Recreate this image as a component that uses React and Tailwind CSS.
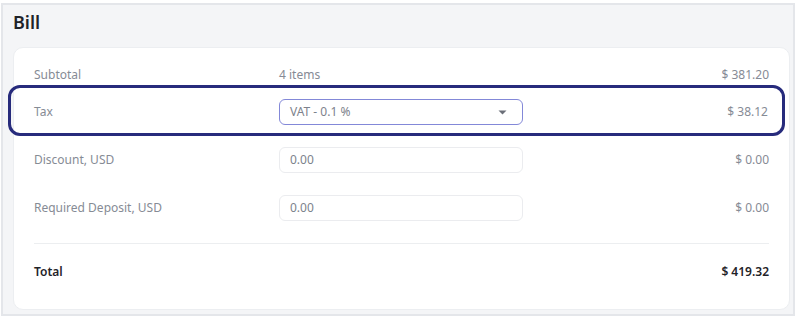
import React from "react";

function Caret() {
  return (
    <svg width="9" height="5" viewBox="0 0 9 5" className="block">
      <path d="M0.5 0.5 L8.5 0.5 L4.5 4.5 Z" fill="#6b6f78" />
    </svg>
  );
}

export default function App() {
  const font = { fontFamily: '"Noto Sans", sans-serif' };
  return (
    <div style={font} className="w-[797px] h-[317px] bg-white">
      <div className="ml-[1px] mt-[3px] w-[794px] h-[313px] bg-[#f4f5f7] border-2 border-[#e4e6ea] flex flex-col">
        <div className="pl-[10px] pt-[2px] h-[42px] text-[18px] font-semibold text-[#1f2328] leading-[30px]">
          Bill
        </div>
        <div className="ml-[10px] w-[777px] flex-1 mb-[4px] bg-white border border-[#eceef1] rounded-[10px] pt-[17px] flex flex-col text-[12px] text-[#868b95]">
          {/* Subtotal */}
          <div className="h-[20px] px-[20px] flex items-center">
            <div className="w-[245px]">Subtotal</div>
            <div className="flex-1">4 items</div>
            <div className="text-right">$ 381.20</div>
          </div>
          {/* Tax highlighted */}
          <div className="-ml-[6px] mr-[4px] border-[3px] border-[#272b7c] rounded-[12px] pt-[11px] pb-[8px] pl-[23px] pr-[14px] flex items-center">
            <div className="w-[245px]">Tax</div>
            <div className="w-[244px] h-[26px] border border-[#8388d8] rounded-[6px] flex items-center pl-[10px] pr-[15px] text-[#7d828c]">
              <span className="flex-1">VAT - 0.1 %</span>
              <Caret />
            </div>
            <div className="flex-1 text-right">$ 38.12</div>
          </div>
          {/* Discount */}
          <div className="mt-[11px] h-[26px] px-[20px] flex items-center">
            <div className="w-[245px]">Discount, USD</div>
            <div className="w-[244px] h-[26px] border border-[#ebecef] rounded-[6px] flex items-center pl-[10px] text-[#7d828c]">
              0.00
            </div>
            <div className="flex-1 text-right">$ 0.00</div>
          </div>
          {/* Deposit */}
          <div className="mt-[22px] h-[26px] px-[20px] flex items-center">
            <div className="w-[245px]">Required Deposit, USD</div>
            <div className="w-[244px] h-[26px] border border-[#ebecef] rounded-[6px] flex items-center pl-[10px] text-[#7d828c]">
              0.00
            </div>
            <div className="flex-1 text-right">$ 0.00</div>
          </div>
          <div className="mx-[20px] mt-[22px] h-px bg-[#eceef0]" />
          {/* Total */}
          <div className="mt-[18px] h-[20px] px-[20px] flex items-center font-semibold text-[#1f2328]">
            <div className="flex-1">Total</div>
            <div className="text-right">$ 419.32</div>
          </div>
        </div>
      </div>
    </div>
  );
}
